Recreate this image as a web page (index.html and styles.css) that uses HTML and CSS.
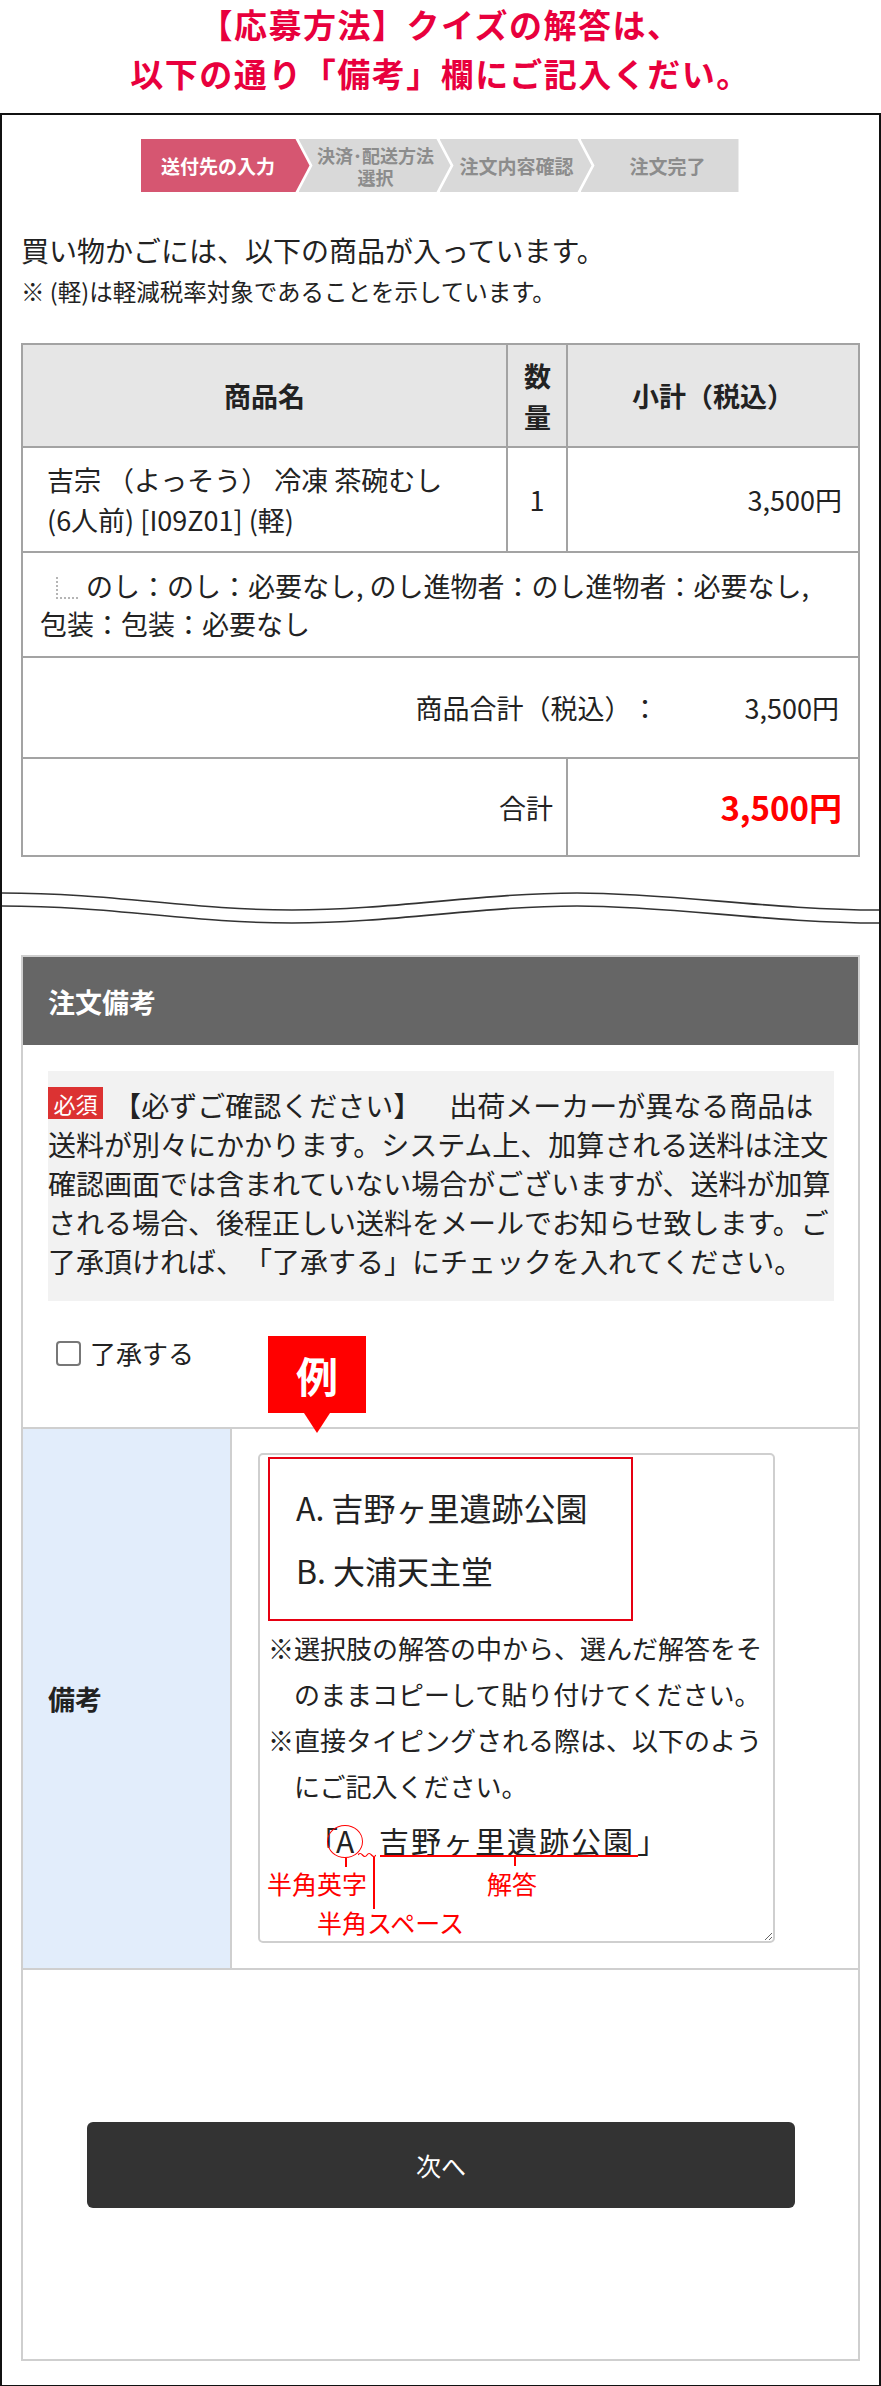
FILE: index.html
```html
<!DOCTYPE html>
<html lang="ja">

<head>
    <meta charset="UTF-8">
    <meta name="viewport" content="width=device-width, initial-scale=1.0">
    <title>ご注文手続き</title>
    <link rel="stylesheet" href="styles.css">
</head>

<body>
    <h1 class="lead">【応募方法】クイズの解答は、<br>以下の通り「備考」欄にご記入くだい。</h1>

    <div class="frame">
        <ol class="steps">
            <li class="current">送付先の入力</li>
            <li>決済･配送方法<br>選択</li>
            <li>注文内容確認</li>
            <li>注文完了</li>
        </ol>

        <p class="intro">買い物かごには、以下の商品が入っています。</p>
        <p class="note">※ (軽)は軽減税率対象であることを示しています。</p>

        <table class="cart">
            <colgroup>
                <col class="c-name">
                <col class="c-qty">
                <col class="c-sub">
            </colgroup>
            <tr class="head">
                <th>商品名</th>
                <th class="qty-head">数量</th>
                <th>小計（税込）</th>
            </tr>
            <tr class="item">
                <td class="name">吉宗 （よっそう） 冷凍 茶碗むし <span class="nw">(6人前) [I09Z01] (軽)</span></td>
                <td class="qty">1</td>
                <td class="num">3,500円</td>
            </tr>
            <tr class="option">
                <td colspan="3"><span class="branch"></span>のし：のし：必要なし, のし進物者：のし進物者：必要なし, <span class="nw">包装：包装：必要なし</span></td>
            </tr>
            <tr class="subtotal">
                <td colspan="3">商品合計（税込）：<span class="subtotal-val">3,500円</span></td>
            </tr>
            <tr class="total">
                <td colspan="2" class="total-label">合計</td>
                <td class="total-val">3,500円</td>
            </tr>
        </table>

        <svg class="cut" viewBox="0 0 877 40" preserveAspectRatio="none">
            <path d="M0,6 C110,6 190,23 290,23 S480,6 575,6 S770,23 877,23" />
            <path d="M0,19 C110,19 190,36 290,36 S480,19 575,19 S770,36 877,36" />
        </svg>

        <section class="memo">
            <h2 class="memo-head">注文備考</h2>
            <div class="memo-body">
                <p class="notice"><span class="req">必須</span> 【必ずご確認ください】　出荷メーカーが異なる商品は送料が別々にかかります。システム上、加算される送料は注文確認画面では含まれていない場合がございますが、送料が加算される場合、後程正しい送料をメールでお知らせ致します。ご了承頂ければ、「了承する」にチェックを入れてください。</p>
                <label class="agree"><input type="checkbox">了承する</label>
            </div>

            <div class="memo-row">
                <div class="example-tag">例</div>
                <div class="memo-label">備考</div>
                <div class="memo-field">
                    <div class="textbox">
                        <div class="answers">
                            <p>A. 吉野ヶ里遺跡公園</p>
                            <p>B. 大浦天主堂</p>
                        </div>
                        <ul class="hints">
                            <li>※選択肢の解答の中から、選んだ解答をそのままコピーして貼り付けてください。</li>
                            <li>※直接タイピングされる際は、以下のようにご記入ください。</li>
                        </ul>
                        <div class="sample">
                            <span class="s-open">「</span>
                            <span class="s-circle">A</span>
                            <svg class="s-wave" viewBox="0 0 18 6">
                                <path d="M0,3 q2,-3 4.5,0 t4.5,0 t4.5,0 t4.5,0" />
                            </svg>
                            <span class="s-answer">吉野ヶ里遺跡公園</span>
                            <span class="s-close">」</span>
                            <span class="s-line s-under"></span>
                            <span class="s-line s-tick1"></span>
                            <span class="s-line s-tick2"></span>
                            <span class="s-line s-tick3"></span>
                            <span class="s-label s-l1">半角英字</span>
                            <span class="s-label s-l2">半角スペース</span>
                            <span class="s-label s-l3">解答</span>
                        </div>
                    </div>
                </div>
            </div>

            <div class="memo-foot">
                <button class="next">次へ</button>
            </div>
        </section>
    </div>
</body>

</html>
```

FILE: styles.css
```css
* {
    box-sizing: border-box;
}

body {
    margin: 0;
    font-family: "Noto Sans CJK JP", "Noto Sans", sans-serif;
    color: #222;
    background: #fff;
    text-spacing-trim: space-all;
}

p {
    margin: 0;
}

.nw {
    white-space: nowrap;
}

.lead {
    margin: 0;
    height: 113px;
    font-size: 33px;
    line-height: 49px;
    letter-spacing: 1.5px;
    text-align: center;
    color: #e8003d;
    font-weight: bold;
}

.frame {
    border: 2px solid #111;
    padding: 24px 19px;
}

/* steps */
.steps {
    list-style: none;
    margin: 0 auto;
    padding: 0;
    width: 600px;
    height: 53px;
    display: flex;
}

.steps li {
    flex: none;
    width: 152px;
    margin-left: -11px;
    padding: 0 14px 0 16px;
    background: #d9d9d9;
    color: #8c8c8c;
    font-weight: bold;
    font-size: 19px;
    line-height: 22px;
    display: flex;
    align-items: center;
    justify-content: center;
    text-align: center;
    clip-path: polygon(0 0, calc(100% - 14px) 0, 100% 50%, calc(100% - 14px) 100%, 0 100%, 14px 50%);
}

.steps li:nth-child(2) {
    font-size: 18px;
}

.steps li:first-child {
    width: 169px;
    margin-left: 0;
    padding-left: 0;
    clip-path: polygon(0 0, calc(100% - 14px) 0, 100% 50%, calc(100% - 14px) 100%, 0 100%);
}

.steps li:last-child {
    width: 158px;
    padding-right: 0;
    clip-path: polygon(0 0, 100% 0, 100% 100%, 0 100%, 14px 50%);
}

.steps .current {
    background: #d65671;
    color: #fff;
}

.intro {
    margin-top: 38px;
    font-size: 28px;
    line-height: 40px;
}

.note {
    margin-top: 4px;
    font-size: 23.5px;
    line-height: 34px;
}

/* cart table */
.cart {
    width: 100%;
    margin-top: 35px;
    border-collapse: collapse;
    table-layout: fixed;
    font-size: 27px;
}

.c-name {
    width: 485px;
}

.c-qty {
    width: 60px;
}

.cart th,
.cart td {
    border: 2px solid #a3a3a3;
    padding: 0;
}

.head th {
    height: 103px;
    background: #e6e6e6;
    font-weight: bold;
    line-height: 41px;
}

.qty-head {
    padding: 0 16px !important;
}

.item td {
    height: 105px;
    line-height: 40px;
}

.item .name {
    padding: 0 20px 0 24px;
}

.item .qty {
    text-align: center;
}

.item .num {
    text-align: right;
    padding-right: 16px;
}

.option td {
    height: 105px;
    line-height: 38px;
    padding: 0 14px 0 17px;
}

.branch {
    display: inline-block;
    width: 22px;
    height: 22px;
    margin: 0 8px 0 16px;
    border-left: 2px dotted #b5b5b5;
    border-bottom: 2px dotted #b5b5b5;
    vertical-align: -2px;
}

.subtotal td {
    height: 101px;
    text-align: right;
    padding-right: 19px;
}

.subtotal-val {
    margin-left: 86px;
}

.total td {
    height: 98px;
    text-align: right;
}

.total-label {
    padding-right: 13px !important;
}

.total-val {
    padding-right: 16px !important;
    color: #f00;
    font-weight: bold;
    font-size: 33px;
}

.cut {
    display: block;
    width: 877px;
    height: 40px;
    margin: 30px -19px 0;
}

.cut path {
    fill: none;
    stroke: #333;
    stroke-width: 1.6;
}

/* memo section */
.memo {
    margin-top: 28px;
    border: 2px solid #cfcfcf;
}

.memo-head {
    margin: 0;
    height: 88px;
    padding-left: 25px;
    display: flex;
    align-items: center;
    background: #666;
    color: #fff;
    font-size: 27px;
    font-weight: bold;
}

.memo-body {
    padding: 26px 24px 60px 25px;
}

.notice {
    background: #f2f2f2;
    padding: 15px 0 20px;
    font-size: 28px;
    line-height: 39px;
}

.req {
    display: inline-block;
    vertical-align: top;
    margin: 1px 4px 0 0;
    padding: 0 5.5px;
    background: #dc3232;
    color: #fff;
    font-size: 22px;
    line-height: 32px;
}

.agree {
    display: flex;
    align-items: center;
    gap: 9px;
    height: 30px;
    margin: 36px 0 0 8px;
    font-size: 26px;
}

.agree input {
    appearance: none;
    width: 25px;
    height: 25px;
    margin: 3px 0 0;
    border: 2px solid #777;
    border-radius: 4px;
    background: #fff;
}

.memo-row {
    position: relative;
    display: grid;
    grid-template-columns: 209px 1fr;
    border-top: 2px solid #cfcfcf;
}

.memo-label {
    background: #e2edfb;
    border-right: 2px solid #cfcfcf;
    padding-left: 25px;
    display: flex;
    align-items: center;
    font-size: 27px;
    font-weight: bold;
}

.memo-field {
    padding: 24px 0 25px 26px;
}

.example-tag {
    position: absolute;
    left: 245px;
    top: -93px;
    width: 98px;
    height: 77px;
    background: #f00;
    color: #fff;
    font-size: 42px;
    font-weight: bold;
    line-height: 77px;
    text-align: center;
    z-index: 2;
}

.example-tag::after {
    content: "";
    position: absolute;
    left: 36px;
    top: 100%;
    border-left: 13px solid transparent;
    border-right: 13px solid transparent;
    border-top: 20px solid #f00;
}

.textbox {
    width: 517px;
    height: 490px;
    padding: 2px 8px;
    border: 2px solid #cfcfcf;
    border-radius: 5px;
    resize: vertical;
    overflow: hidden;
}

.answers {
    width: 365px;
    padding: 17px 26px;
    border: 2px solid #e60012;
    font-size: 32px;
    line-height: 63px;
}

.hints {
    list-style: none;
    margin: 4px 0 0;
    padding: 0;
    font-size: 26px;
    line-height: 46px;
}

.hints li {
    padding-left: 1em;
    text-indent: -1em;
}

/* annotated sample */
.sample {
    position: relative;
    height: 120px;
    margin-top: 6px;
}

.s-open,
.s-answer,
.s-close {
    position: absolute;
    top: 5px;
    font-size: 30px;
    line-height: 40px;
}

.s-open {
    left: 40px;
}

.s-answer {
    left: 111px;
    letter-spacing: 2px;
}

.s-close {
    left: 369px;
}

.s-circle {
    position: absolute;
    left: 59px;
    top: 10px;
    width: 36px;
    height: 33px;
    border: 1.5px solid #f00;
    border-radius: 50%;
    font-size: 30px;
    line-height: 29px;
    text-align: center;
}

.s-wave {
    position: absolute;
    left: 90px;
    top: 37px;
    width: 18px;
    height: 6px;
}

.s-wave path {
    fill: none;
    stroke: #f00;
    stroke-width: 1.2;
}

.s-line {
    position: absolute;
    background: #f00;
}

.s-under {
    left: 112px;
    top: 40px;
    width: 258px;
    height: 1.5px;
}

.s-tick1 {
    left: 77px;
    top: 43px;
    width: 1.5px;
    height: 9px;
}

.s-tick2 {
    left: 105px;
    top: 42px;
    width: 1.5px;
    height: 52px;
}

.s-tick3 {
    left: 246px;
    top: 41px;
    width: 1.5px;
    height: 10px;
}

.s-label {
    position: absolute;
    color: #f00;
    font-size: 25px;
    line-height: 28px;
    white-space: nowrap;
}

.s-l1 {
    left: -1px;
    top: 54px;
}

.s-l2 {
    left: 49px;
    top: 93px;
}

.s-l3 {
    left: 219px;
    top: 54px;
}

.memo-foot {
    border-top: 2px solid #cfcfcf;
    padding: 152px 63px 151px 64px;
}

.next {
    display: block;
    width: 100%;
    height: 86px;
    border: 0;
    border-radius: 6px;
    background: #333;
    color: #fff;
    font-family: inherit;
    font-size: 25px;
    cursor: pointer;
}
```
